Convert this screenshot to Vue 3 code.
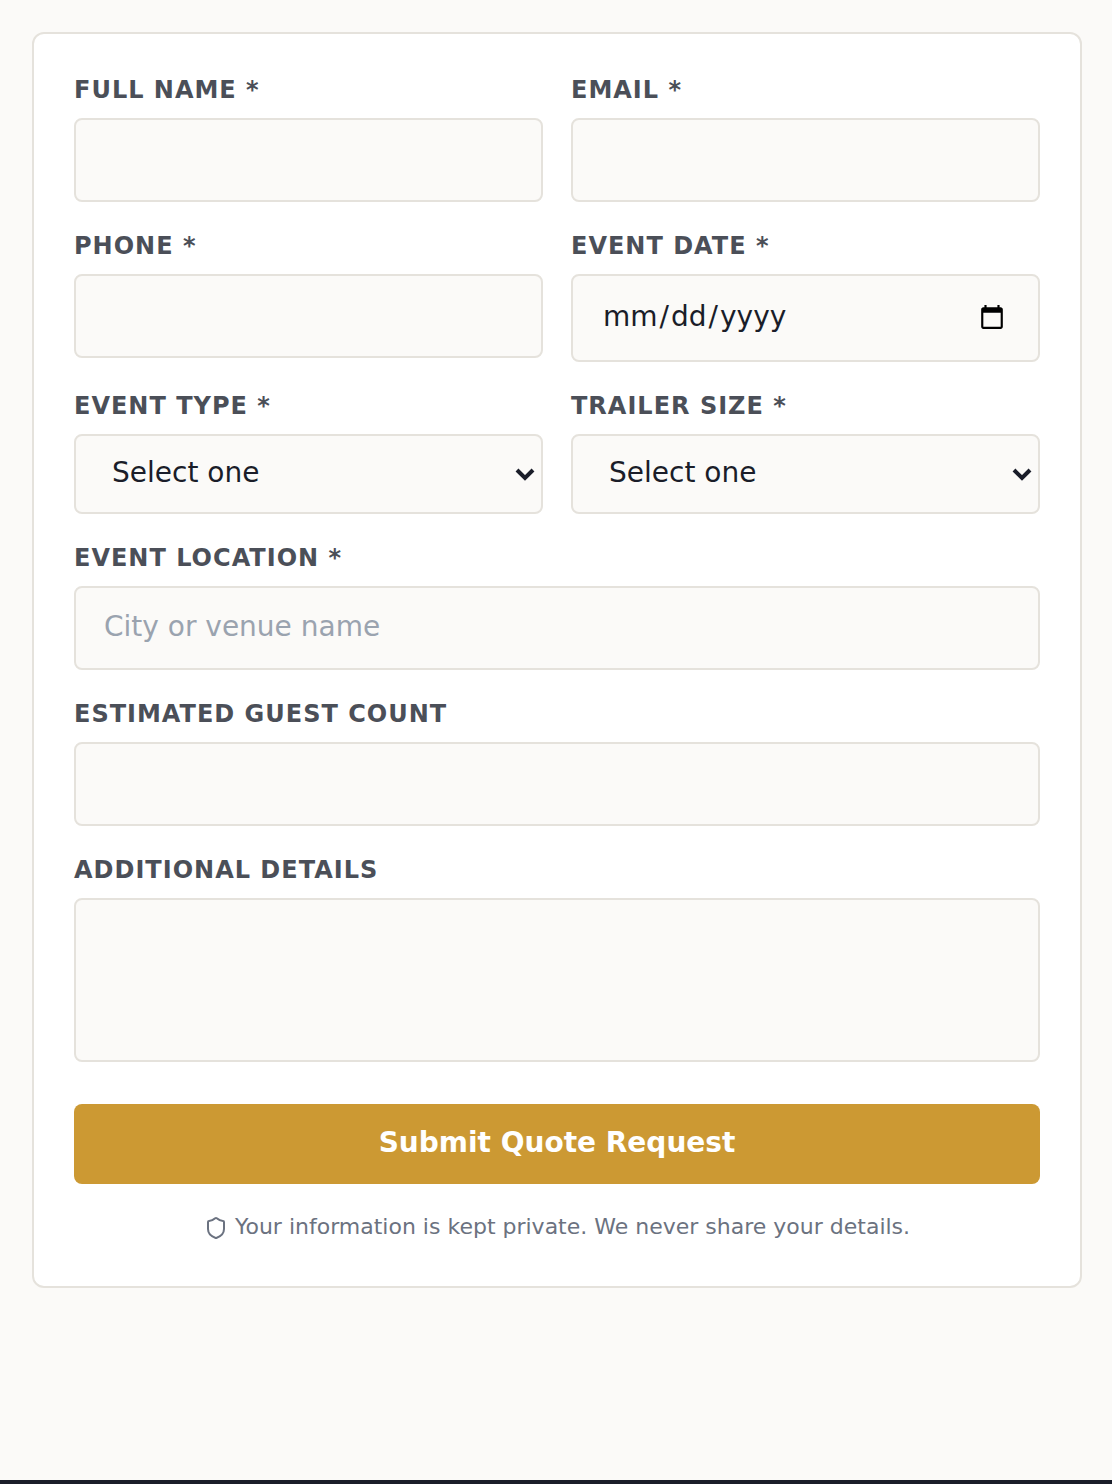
<template>
  <main class="quote-page">
    <form class="quote-form" @submit.prevent="submitQuote">
      <div class="row">
        <div class="field">
          <label for="name">Full Name *</label>
          <input id="name" v-model="form.name" type="text" />
        </div>
        <div class="field">
          <label for="email">Email *</label>
          <input id="email" v-model="form.email" type="email" />
        </div>
      </div>

      <div class="row">
        <div class="field">
          <label for="phone">Phone *</label>
          <input id="phone" v-model="form.phone" type="tel" />
        </div>
        <div class="field">
          <label for="date">Event Date *</label>
          <input id="date" v-model="form.date" class="date" type="date" />
        </div>
      </div>

      <div class="row">
        <div class="field">
          <label for="type">Event Type *</label>
          <div class="select-wrap">
            <select id="type" v-model="form.type">
              <option value="">Select one</option>
              <option v-for="type in eventTypes" :key="type">{{ type }}</option>
            </select>
            <svg class="chevron" viewBox="0 0 20 14" aria-hidden="true">
              <path d="M2 3l8 8 8-8" />
            </svg>
          </div>
        </div>
        <div class="field">
          <label for="size">Trailer Size *</label>
          <div class="select-wrap">
            <select id="size" v-model="form.size">
              <option value="">Select one</option>
              <option v-for="size in trailerSizes" :key="size">{{ size }}</option>
            </select>
            <svg class="chevron" viewBox="0 0 20 14" aria-hidden="true">
              <path d="M2 3l8 8 8-8" />
            </svg>
          </div>
        </div>
      </div>

      <div class="field">
        <label for="location">Event Location *</label>
        <input
          id="location"
          v-model="form.location"
          type="text"
          placeholder="City or venue name"
        />
      </div>

      <div class="field">
        <label for="guests">Estimated Guest Count</label>
        <input id="guests" v-model="form.guests" type="text" inputmode="numeric" />
      </div>

      <div class="field">
        <label for="details">Additional Details</label>
        <textarea id="details" v-model="form.details"></textarea>
      </div>

      <button class="submit" type="submit">Submit Quote Request</button>

      <p class="privacy">
        <svg class="shield" viewBox="0 0 24 24" aria-hidden="true">
          <path
            d="M20 13c0 5-3.5 7.5-7.66 8.95a1 1 0 0 1-.67-.01C7.5 20.5 4 18 4 13V6a1 1 0 0 1 1-1c2 0 4.5-1.2 6.24-2.72a1.17 1.17 0 0 1 1.52 0C14.51 3.81 17 5 19 5a1 1 0 0 1 1 1z"
          />
        </svg>
        Your information is kept private. We never share your details.
      </p>
    </form>
  </main>
  <footer class="footer"></footer>
</template>

<script setup>
import { reactive } from "vue";

const eventTypes = ["Wedding", "Corporate", "Festival", "Other"];
const trailerSizes = ["2 Station", "3 Station", "8 Station"];

const form = reactive({
  name: "",
  email: "",
  phone: "",
  date: "",
  type: "",
  size: "",
  location: "",
  guests: "",
  details: "",
});

const emit = defineEmits(["submit-quote"]);

function submitQuote() {
  emit("submit-quote", { ...form });
}
</script>

<style>
body {
  background: #fbfaf8;
}
</style>

<style scoped>
.quote-page {
  padding: 32px 30px 192px 32px;
  font-family: "DejaVu Sans", sans-serif;
}

.quote-form {
  display: flex;
  flex-direction: column;
  gap: 28px;
  padding: 40px 40px 44px;
  background: #fff;
  border: 2px solid #e5e2dc;
  border-radius: 12px;
}

.row {
  display: grid;
  grid-template-columns: 1fr 1fr;
  align-items: start;
  gap: 28px;
}

.field {
  display: flex;
  flex-direction: column;
  gap: 12px;
  min-width: 0;
}

label {
  color: #4b4f58;
  font-size: 24px;
  font-weight: 700;
  line-height: 32px;
  letter-spacing: 1px;
  text-transform: uppercase;
}

input,
select,
textarea {
  box-sizing: border-box;
  width: 100%;
  height: 84px;
  margin: 0;
  padding: 18px 28px 22px;
  background: #fbfaf8;
  border: 2px solid #e5e2dc;
  border-radius: 8px;
  color: #1a1d29;
  font-family: inherit;
  font-size: 28px;
}

input::placeholder {
  color: #9aa3af;
  opacity: 1;
}

.date {
  height: 88px;
}

.date::-webkit-datetime-edit-month-field,
.date::-webkit-datetime-edit-day-field,
.date::-webkit-datetime-edit-year-field {
  padding: 0 2px;
}

.date::-webkit-calendar-picker-indicator {
  width: 28px;
  height: 28px;
  padding: 6px 4px 2px;
}

.select-wrap {
  display: grid;
  align-items: center;
}

.select-wrap > * {
  grid-area: 1 / 1;
}

select {
  height: 80px;
  padding: 0 36px 4px;
  appearance: none;
}

.chevron {
  justify-self: end;
  width: 20px;
  height: 14px;
  margin-right: 8px;
  fill: none;
  stroke: #1a1d29;
  stroke-width: 4;
  pointer-events: none;
}

textarea {
  display: block;
  height: 164px;
  resize: none;
}

.submit {
  height: 80px;
  margin-top: 14px;
  padding: 0 28px 4px;
  border: 0;
  border-radius: 8px;
  background: #cc9933;
  color: #fff;
  font-family: inherit;
  font-size: 28px;
  font-weight: 700;
}

.privacy {
  margin: 0;
  color: #6b7280;
  font-size: 22px;
  line-height: 30px;
  text-align: center;
}

.shield {
  width: 24px;
  height: 24px;
  vertical-align: middle;
  fill: none;
  stroke: currentColor;
  stroke-width: 2;
  stroke-linecap: round;
  stroke-linejoin: round;
}

.footer {
  height: 4px;
  background: #1a1d29;
}
</style>
